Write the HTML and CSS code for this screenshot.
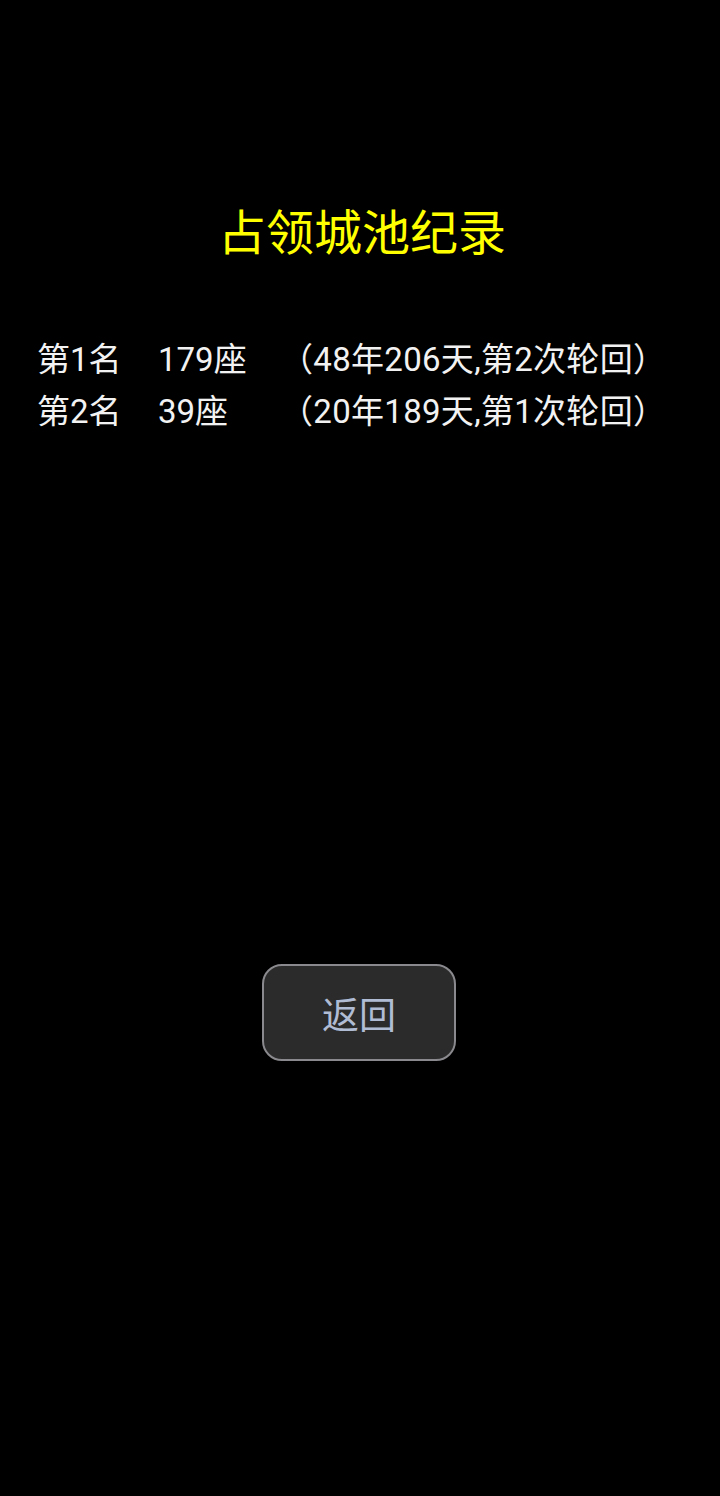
FILE: index.html
```html
<!DOCTYPE html>
<html lang="zh-CN">
<head>
<meta charset="utf-8">
<title>占领城池纪录</title>
<link rel="stylesheet" href="styles.css">
</head>
<body>
<main class="page">
  <h1 class="title">占领城池纪录</h1>
  <div class="records">
    <div class="row">
      <span class="rank">第1名</span>
      <span class="count">179座</span>
      <span class="detail">（48年206天,第2次轮回）</span>
    </div>
    <div class="row">
      <span class="rank">第2名</span>
      <span class="count">39座</span>
      <span class="detail">（20年189天,第1次轮回）</span>
    </div>
  </div>
  <div class="actions">
    <button class="back" type="button">返回</button>
  </div>
</main>
</body>
</html>
```

FILE: styles.css
```css
html, body {
  margin: 0;
  padding: 0;
  background: #000;
}
.page {
  width: 720px;
  height: 1496px;
  box-sizing: border-box;
  padding-top: 204px;
  font-family: Roboto, "Noto Sans CJK SC", sans-serif;
  color: #f2f2f2;
}
.title {
  margin: 0;
  text-align: center;
  font-size: 48px;
  line-height: 60px;
  font-weight: 400;
  color: #ffff00;
  padding-left: 4px;
}
.records {
  margin-top: 70px;
  padding-left: 37px;
}
.row {
  display: grid;
  grid-template-columns: 121px 122px auto;
  font-size: 33px;
  line-height: 52px;
  white-space: nowrap;
}
.detail {
  letter-spacing: 0.3px;
}
.actions {
  margin-top: 526px;
  display: flex;
  justify-content: center;
}
.back {
  width: 194px;
  height: 97px;
  margin-left: -2px;
  box-sizing: border-box;
  border: 2px solid #8a8a8e;
  border-radius: 20px;
  background: #2b2b2b;
  color: #b0bcd4;
  font-family: Roboto, "Noto Sans CJK SC", sans-serif;
  font-size: 37px;
  padding: 0;
}
```
